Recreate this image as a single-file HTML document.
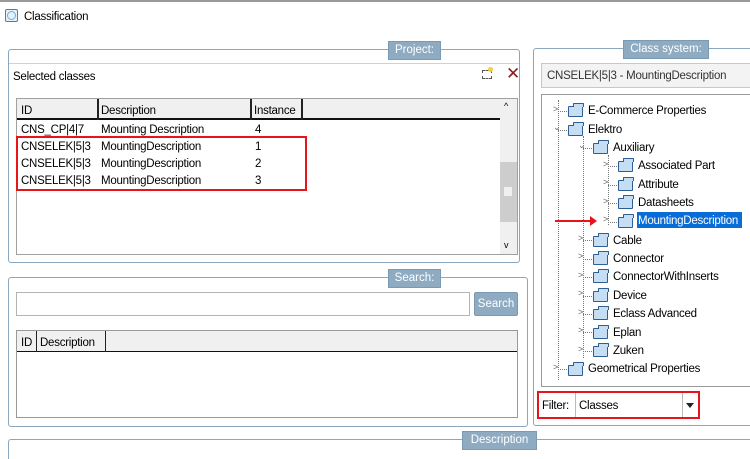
<!DOCTYPE html>
<html><head><style>
*{margin:0;padding:0;box-sizing:border-box}
html,body{width:750px;height:459px;overflow:hidden}
body{background:#fff;font-family:"Liberation Sans",sans-serif;font-size:11px;color:#000;position:relative}
.a{position:absolute}
.panel{position:absolute;border:1px solid #8aa7bf;border-radius:3px}
.lbl{position:absolute;background:#8eabc2;color:#fff;font-size:11.5px;text-align:center;line-height:17px;border:1px solid #7a99b2}
.t{position:absolute;white-space:nowrap;font-size:11.5px;letter-spacing:-0.25px;padding-top:2px}
.fold{position:absolute;width:15px;height:11px;border:1px solid #2f5f92;background:#c6def3;border-radius:1px}
.fold:before{content:"";position:absolute;left:4px;top:-4px;width:9px;height:3px;border:1px solid #2f5f92;border-bottom:none;background:#c6def3;border-radius:1px 1px 0 0}
.arr{position:absolute;font-size:9px;color:#666}
.dl{position:absolute;border-left:1px dotted #777}
.dh{position:absolute;border-top:1px dotted #777;width:9px}
</style></head><body>
<div class="a" style="left:0;top:0;width:750px;height:2px;background:#9a9a9a"></div>
<div class="a" style="left:5px;top:9px;width:13px;height:13px;border:1px solid #4a7fb0;border-radius:2px;background:#e6f2fb"><div class="a" style="left:1px;top:1px;width:9px;height:9px;border:1px solid #7fa8cc;border-radius:50%"></div></div>
<div class="t" style="left:24px;top:9px">Classification</div>

<!-- Project panel -->
<div class="panel" style="left:8px;top:49px;width:512px;height:214px"></div>
<div class="lbl" style="left:388px;top:41px;width:53px">Project:</div>
<div class="a" style="left:9px;top:63px;width:510px;height:1px;background:#c8d3dc"></div>
<div class="t" style="left:13px;top:69px">Selected classes</div>
<div class="a" style="left:482px;top:70px;width:10px;height:9px;border:1px dashed #555"></div>
<div class="a" style="left:488px;top:67px;width:5px;height:5px;background:#f4d03f;border-radius:50%"></div>
<div class="t" style="left:506px;top:62px;color:#8b1a1a;font-size:17px">✕</div>
<div class="a" style="left:16px;top:98px;width:502px;height:157px;border:1px solid #a0a0a0"></div>
<div class="a" style="left:17px;top:99px;width:483px;height:21px;background:#f0f0f0;border-bottom:2px solid #111"></div>
<div class="a" style="left:97px;top:99px;width:2px;height:21px;background:#222"></div>
<div class="a" style="left:250px;top:99px;width:2px;height:21px;background:#222"></div>
<div class="a" style="left:301px;top:99px;width:2px;height:21px;background:#222"></div>
<div class="t" style="left:21px;top:103px">ID</div>
<div class="t" style="left:101px;top:103px">Description</div>
<div class="t" style="left:254px;top:103px">Instance</div>
<div class="a" style="left:500px;top:99px;width:17px;height:155px;background:#f0f0f0"></div>
<div class="a" style="left:500px;top:162px;width:17px;height:60px;background:#cdcdcd"></div>
<div class="a" style="left:504px;top:187px;width:8px;height:9px;background:#f0f0f0"></div>
<div class="t" style="left:504px;top:99px;font-size:9px">^</div>
<div class="t" style="left:504px;top:238px;font-size:9px">v</div>
<div class="t" style="left:21px;top:122px">CNS_CP|4|7</div><div class="t" style="left:101px;top:122px">Mounting Description</div><div class="t" style="left:255px;top:122px">4</div>
<div class="t" style="left:21px;top:139px">CNSELEK|5|3</div><div class="t" style="left:101px;top:139px">MountingDescription</div><div class="t" style="left:255px;top:139px">1</div>
<div class="t" style="left:21px;top:156px">CNSELEK|5|3</div><div class="t" style="left:101px;top:156px">MountingDescription</div><div class="t" style="left:255px;top:156px">2</div>
<div class="t" style="left:21px;top:173px">CNSELEK|5|3</div><div class="t" style="left:101px;top:173px">MountingDescription</div><div class="t" style="left:255px;top:173px">3</div>
<div class="a" style="left:16px;top:136px;width:291px;height:55px;border:2px solid #e8141c"></div>

<!-- Search panel -->
<div class="panel" style="left:8px;top:277px;width:520px;height:150px"></div>
<div class="lbl" style="left:388px;top:269px;width:53px">Search:</div>
<div class="a" style="left:16px;top:292px;width:454px;height:24px;border:1px solid #b4b4b4"></div>
<div class="lbl" style="left:474px;top:292px;width:44px;height:24px;line-height:22px;border-radius:2px">Search</div>
<div class="a" style="left:16px;top:330px;width:502px;height:88px;border:1px solid #999"></div>
<div class="a" style="left:17px;top:331px;width:500px;height:21px;background:#f0f0f0;border-bottom:1px solid #111"></div>
<div class="a" style="left:36px;top:331px;width:1px;height:21px;background:#222"></div>
<div class="a" style="left:105px;top:331px;width:1px;height:21px;background:#222"></div>
<div class="t" style="left:21px;top:335px">ID</div>
<div class="t" style="left:40px;top:335px">Description</div>

<!-- Description panel -->
<div class="a" style="left:8px;top:439px;width:742px;height:20px;border:1px solid #8aa7bf;border-bottom:none;border-right:none;border-radius:3px 0 0 0"></div>
<div class="lbl" style="left:462px;top:431px;width:75px">Description</div>

<!-- Class system panel -->
<div class="a" style="left:533px;top:48px;width:217px;height:378px;border:1px solid #8aa7bf;border-right:none;border-radius:3px 0 0 3px"></div>
<div class="lbl" style="left:623px;top:40px;width:86px">Class system:</div>
<div class="a" style="left:541px;top:63px;width:215px;height:25px;border:1px solid #c8c8c8;background:#f3f3f3"></div>
<div class="t" style="left:547px;top:68px;color:#333">CNSELEK|5|3 - MountingDescription</div>
<div class="a" style="left:541px;top:94px;width:215px;height:293px;border:1px solid #999"></div>
<div class="dl" style="left:558px;top:100px;height:280px"></div>
<div class="dl" style="left:583px;top:136px;height:222px"></div>
<div class="dl" style="left:608px;top:155px;height:70px"></div>

<div class="dh" style="left:558px;top:111px"></div><div class="arr" style="left:553px;top:104px">&gt;</div><div class="fold" style="left:568px;top:106px"></div><div class="t" style="left:588px;top:103px">E-Commerce Properties</div>
<div class="dh" style="left:558px;top:130px"></div><div class="arr" style="left:553px;top:122px">⌄</div><div class="fold" style="left:568px;top:125px"></div><div class="t" style="left:588px;top:122px">Elektro</div>
<div class="dh" style="left:583px;top:148px"></div><div class="arr" style="left:578px;top:140px">⌄</div><div class="fold" style="left:593px;top:143px"></div><div class="t" style="left:613px;top:140px">Auxiliary</div>
<div class="dh" style="left:608px;top:166px"></div><div class="arr" style="left:603px;top:159px">&gt;</div><div class="fold" style="left:618px;top:161px"></div><div class="t" style="left:638px;top:158px">Associated Part</div>
<div class="dh" style="left:608px;top:185px"></div><div class="arr" style="left:603px;top:177px">&gt;</div><div class="fold" style="left:618px;top:180px"></div><div class="t" style="left:638px;top:177px">Attribute</div>
<div class="dh" style="left:608px;top:203px"></div><div class="arr" style="left:603px;top:196px">&gt;</div><div class="fold" style="left:618px;top:198px"></div><div class="t" style="left:638px;top:195px">Datasheets</div>
<div class="dh" style="left:608px;top:222px"></div><div class="arr" style="left:603px;top:214px">&gt;</div><div class="fold" style="left:618px;top:217px"></div>
<div class="a" style="left:637px;top:212px;width:105px;height:16px;background:#0a6cd6"></div><div class="t" style="left:638px;top:213px;color:#fff">MountingDescription</div>
<div class="a" style="left:555px;top:220px;width:37px;height:2px;background:#e8141c"></div>
<div class="a" style="left:590px;top:216px;width:0;height:0;border-left:7px solid #e8141c;border-top:5px solid transparent;border-bottom:5px solid transparent"></div>
<div class="dh" style="left:583px;top:240px"></div><div class="arr" style="left:578px;top:233px">&gt;</div><div class="fold" style="left:593px;top:236px"></div><div class="t" style="left:613px;top:233px">Cable</div>
<div class="dh" style="left:583px;top:259px"></div><div class="arr" style="left:578px;top:251px">&gt;</div><div class="fold" style="left:593px;top:254px"></div><div class="t" style="left:613px;top:251px">Connector</div>
<div class="dh" style="left:583px;top:277px"></div><div class="arr" style="left:578px;top:270px">&gt;</div><div class="fold" style="left:593px;top:272px"></div><div class="t" style="left:613px;top:269px">ConnectorWithInserts</div>
<div class="dh" style="left:583px;top:296px"></div><div class="arr" style="left:578px;top:288px">&gt;</div><div class="fold" style="left:593px;top:291px"></div><div class="t" style="left:613px;top:288px">Device</div>
<div class="dh" style="left:583px;top:314px"></div><div class="arr" style="left:578px;top:307px">&gt;</div><div class="fold" style="left:593px;top:309px"></div><div class="t" style="left:613px;top:306px">Eclass Advanced</div>
<div class="dh" style="left:583px;top:332px"></div><div class="arr" style="left:578px;top:325px">&gt;</div><div class="fold" style="left:593px;top:328px"></div><div class="t" style="left:613px;top:325px">Eplan</div>
<div class="dh" style="left:583px;top:351px"></div><div class="arr" style="left:578px;top:344px">&gt;</div><div class="fold" style="left:593px;top:346px"></div><div class="t" style="left:613px;top:343px">Zuken</div>
<div class="dh" style="left:558px;top:369px"></div><div class="arr" style="left:553px;top:362px">&gt;</div><div class="fold" style="left:568px;top:365px"></div><div class="t" style="left:588px;top:361px">Geometrical Properties</div>

<div class="a" style="left:537px;top:391px;width:163px;height:28px;border:2px solid #e8141c"></div>
<div class="t" style="left:542px;top:398px">Filter:</div>
<div class="a" style="left:575px;top:393px;width:1px;height:24px;background:#bbb"></div>
<div class="t" style="left:579px;top:398px">Classes</div>
<div class="a" style="left:682px;top:393px;width:1px;height:24px;background:#bbb"></div>
<div class="a" style="left:686px;top:403px;width:0;height:0;border-top:5px solid #222;border-left:4px solid transparent;border-right:4px solid transparent"></div>
</body></html>
